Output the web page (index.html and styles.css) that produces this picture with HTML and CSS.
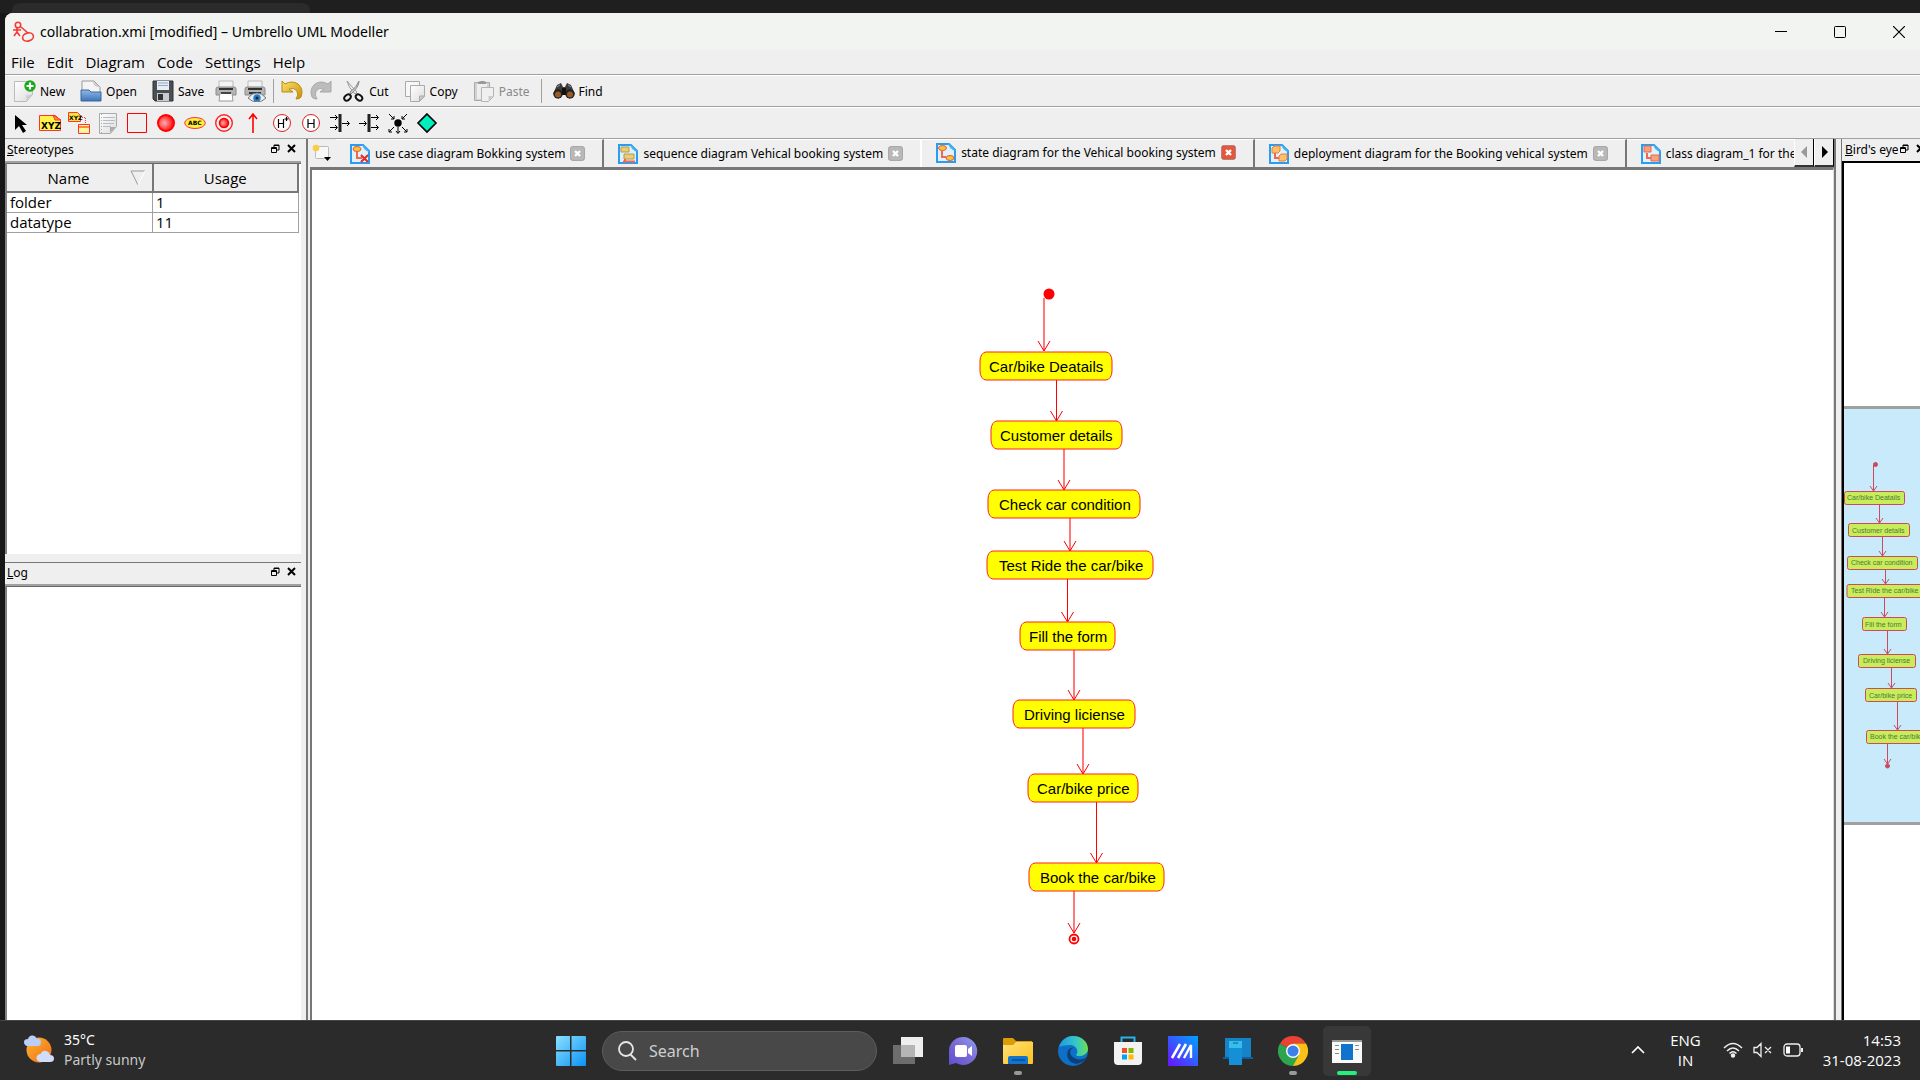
FILE: index.html
```html
<!DOCTYPE html>
<html lang="en">
<head>
<meta charset="utf-8">
<title>collabration.xmi [modified] – Umbrello UML Modeller</title>
<link rel="stylesheet" href="styles.css">
</head>
<body>
<svg class="defs" aria-hidden="true">
  <defs>
    <linearGradient id="sheet" x1="0" y1="0" x2="1" y2="1"><stop offset="0" stop-color="#fff"/><stop offset="1" stop-color="#dcdcdc"/></linearGradient>
    <linearGradient id="gold" x1="0" y1="0" x2="1" y2="1"><stop offset="0" stop-color="#fbe36a"/><stop offset="1" stop-color="#c98f06"/></linearGradient>
    <linearGradient id="blue" x1="0" y1="0" x2="0" y2="1"><stop offset="0" stop-color="#8fb9e8"/><stop offset="1" stop-color="#3f74b5"/></linearGradient>
    <radialGradient id="ball" cx=".4" cy=".5" r=".6"><stop offset="0" stop-color="#ffb0b0"/><stop offset="1" stop-color="#f00"/></radialGradient>
    <linearGradient id="win" x1="0" y1="0" x2="1" y2="1"><stop offset="0" stop-color="#8be0ff"/><stop offset="1" stop-color="#0a92f5"/></linearGradient>
    <linearGradient id="chat" x1="0" y1="1" x2="1" y2="0"><stop offset="0" stop-color="#5b4fd0"/><stop offset=".5" stop-color="#7a6bd6"/><stop offset="1" stop-color="#8fa0f0"/></linearGradient>
    <linearGradient id="folder" x1="0" y1="0" x2="1" y2="1"><stop offset="0" stop-color="#ffe07a"/><stop offset="1" stop-color="#ffc21a"/></linearGradient>
    <linearGradient id="edge" x1="0" y1="0" x2="1" y2="0"><stop offset="0" stop-color="#1f9be0"/><stop offset=".6" stop-color="#35c8c8"/><stop offset="1" stop-color="#6ee04c"/></linearGradient>
    <linearGradient id="asus" x1="0" y1="1" x2="1" y2="0"><stop offset="0" stop-color="#6a12ff"/><stop offset="1" stop-color="#00a2ff"/></linearGradient>
    <linearGradient id="sun" x1="0" y1="0" x2="1" y2="1"><stop offset="0" stop-color="#fbb62c"/><stop offset="1" stop-color="#f26a1b"/></linearGradient>
    <symbol id="doc" viewBox="0 0 20 20"><path d="M1 1h12l6 6v12H1z" fill="#dff1fd" stroke="#2a9df0" stroke-width="2"/><path d="M12 0c1 4 3 7 8 8z" fill="#45b4f5"/></symbol>
    <symbol id="float" viewBox="0 0 9 9"><path d="M3 3V1h5v5H6M3 1.500h5" fill="none" stroke="#000"/><path d="M.5 3.500h5v5h-5zM0 4.500h6" fill="none" stroke="#000"/></symbol>
    <symbol id="cross" viewBox="0 0 9 9"><path d="M1 1l7 7M8 1L1 8" stroke="#000" stroke-width="2"/></symbol>
    <symbol id="tabx" viewBox="0 0 15 15"><rect x=".5" y=".5" width="14" height="14" rx="2" fill="currentColor" stroke="#0003"/><path d="M5 5l5 5M10 5l-5 5" stroke="#fff" stroke-width="2.400"/></symbol>
  </defs>
</svg>

<div class="screen">
  <div class="behind"><div class="behind-tab"></div></div>

  <div class="window">
    <header class="titlebar">
      <svg width="22" height="22" viewBox="0 0 22 22" fill="none" stroke="#f33a35" stroke-width="1.600"><circle cx="5" cy="4" r="2.700"/><path d="M4 7v5M0 9h8M4 11l-3 4M4 11l3 4M8 6l7 6"/><ellipse cx="15" cy="16" rx="5.500" ry="4" transform="rotate(-15 15 16)"/></svg>
      <h1>collabration.xmi [modified] – Umbrello UML Modeller</h1>
      <div class="caption">
        <button aria-label="Minimize"><svg width="12" height="12"><path d="M0 5.500h12" stroke="#000"/></svg></button>
        <button aria-label="Maximize"><svg width="12" height="12"><rect x=".5" y=".5" width="11" height="11" rx="1" fill="none" stroke="#000"/></svg></button>
        <button aria-label="Close"><svg width="12" height="12"><path d="M0 0l12 12M12 0L0 12" stroke="#000" stroke-width="1.200"/></svg></button>
      </div>
    </header>

    <nav class="menubar">
      <button>File</button><button>Edit</button><button>Diagram</button><button>Code</button><button>Settings</button><button>Help</button>
    </nav>

    <div class="toolbar">
      <button class="labelled"><svg class="ic" viewBox="0 0 22 22"><path d="M.5 1.500h18v13l-6 7H.5z" fill="url(#sheet)" stroke="#bbb"/><path d="M12 21c1-3 0-5 0-6 2 1 4 0 6-1z" fill="#ccc"/><circle cx="16" cy="6" r="5.700" fill="#18a818"/><path d="M16 2.500v7M12.500 6h7" stroke="#fff" stroke-width="2.200"/></svg>New</button>
      <button class="labelled"><svg class="ic" viewBox="0 0 22 22"><path d="M2 1h12l6 6v8H2z" fill="#f4f4f4" stroke="#999"/><path d="M13 1c0 4 2 6 7 6z" fill="#ccc"/><path d="M1 10h8l2 2h10v9H1z" fill="url(#blue)" stroke="#3a67a0"/></svg>Open</button>
      <button class="labelled"><svg class="ic" viewBox="0 0 22 22"><path d="M1 1h20v20H3l-2-2z" fill="#4b4e52" stroke="#2f3134"/><path d="M5 1h12v9H5z" fill="#e8edf3"/><path d="M6 3h10M6 5.500h10" stroke="#88a9d0"/><path d="M5 13h12v8H5z" fill="#c9cccf"/><path d="M6 14h5v6H6z" fill="#333"/></svg>Save</button>
      <button aria-label="Print"><svg class="ic" viewBox="0 0 22 22"><path d="M4 1h14v8H4z" fill="#f4f4f4" stroke="#bbb"/><path d="M1 9q0-2 2-2h16q2 0 2 2v6H1z" fill="#b4b4b4" stroke="#8b8b8b"/><path d="M4 9h14" stroke="#333" stroke-width="2"/><path d="M5 13h12l1 8H4z" fill="#fff" stroke="#999"/><path d="M6 13h10" stroke="#444" stroke-width="2"/></svg></button>
      <button aria-label="Print preview"><svg class="ic" viewBox="0 0 22 22"><path d="M4 1h14v8H4z" fill="#f4f4f4" stroke="#bbb"/><path d="M1 9q0-2 2-2h16q2 0 2 2v6H1z" fill="#b4b4b4" stroke="#8b8b8b"/><path d="M4 9h14M5 13h12" stroke="#333" stroke-width="2"/><path d="M4 18q4-5 9-5t9 5q-4 4-9 4t-9-4z" fill="#e8eef5" stroke="#777"/><circle cx="13" cy="18" r="3.700" fill="#2d7cc4"/><circle cx="13" cy="18" r="1.500" fill="#123"/></svg></button>
      <span class="sep"></span>
      <button aria-label="Undo"><svg class="ic" viewBox="0 0 22 22"><path d="M1 1l3 3q7-4 13 0 6 5 3 13-1 2-5 2 3-4 1-8-3-4-8-2l4 3H1z" fill="url(#gold)" stroke="#b98a13"/></svg></button>
      <button aria-label="Redo"><svg class="ic" viewBox="0 0 22 22"><path d="M21 1l-3 3q-7-4-13 0-6 5-3 13 1 2 5 2-3-4-1-8 3-4 8-2l-4 3h11z" fill="#bcbcbc" stroke="#a8a8a8"/></svg></button>
      <button class="labelled"><svg class="ic" viewBox="0 0 22 22"><path d="M4 1q1 6 8 13l2-2Q8 6 4 1z" fill="#eee" stroke="#999"/><path d="M16 1q0 6-8 13l-1-2q7-5 9-11z" fill="#ccc" stroke="#888"/><ellipse cx="4.500" cy="17.500" rx="3.600" ry="2.600" transform="rotate(-40 4.500 17.500)" fill="none" stroke="#111" stroke-width="2"/><ellipse cx="16" cy="17.500" rx="3.600" ry="2.600" transform="rotate(40 16 17.500)" fill="none" stroke="#111" stroke-width="2"/></svg>Cut</button>
      <button class="labelled"><svg class="ic" viewBox="0 0 22 22"><path d="M1.500 1.500h14v15h-14z" fill="#f7f7f7" stroke="#aaa"/><path d="M6.500 5.500h14v11l-5 5h-9z" fill="url(#sheet)" stroke="#aaa"/><path d="M15.500 21v-5h5z" fill="#ccc" stroke="#aaa"/></svg>Copy</button>
      <button class="labelled" disabled><svg class="ic" viewBox="0 0 22 22"><path d="M1.500 2.500h15v18h-15z" fill="#d2d2d2" stroke="#aaa"/><path d="M4 4h10v15H4z" fill="#eee"/><path d="M5 4V2l3-1h3l2 1v2z" fill="#999"/><path d="M8.500 7.500h12v9l-5 5h-7z" fill="#f0f0f0" stroke="#b5b5b5"/><path d="M15.500 21v-5h5z" fill="#ccc"/></svg>Paste</button>
      <span class="sep"></span>
      <button class="labelled"><svg class="ic" viewBox="0 0 22 22"><path d="M4 5l4-2 2 4h2l2-4 4 2 4 9H0z" fill="#3a3a3a"/><circle cx="5" cy="14" r="4.700" fill="#222"/><circle cx="17" cy="14" r="4.700" fill="#222"/><path d="M9 8h4v7H9z" fill="#111"/><circle cx="5" cy="14.500" r="3" fill="#9a5a24"/><circle cx="17" cy="14.500" r="3" fill="#9a5a24"/><path d="M4 7l3-2M15 5l3 2" stroke="#999"/></svg>Find</button>
    </div>

    <div class="toolbar">
      <button aria-label="Select"><svg class="ic" viewBox="0 0 22 22"><path d="M5 3v15l4-4 4 7 3-2-4-6h5z" fill="#000"/></svg></button>
      <button aria-label="Note"><svg class="ic" viewBox="0 0 22 22"><path d="M.5 3.500h16l5 5v10H.5z" fill="#fff34a" stroke="#f33"/><path d="M14 3l2 5h6z" fill="#fb9b1c" stroke="#f33"/><text class="g-xyz" x="2" y="17">XYZ</text></svg></button>
      <button aria-label="Anchor"><svg class="ic" viewBox="0 0 22 22"><path d="M.5.500h9l3 3v6H.5z" fill="#ffe83a" stroke="#f33"/><text class="g-small" x="1" y="8">XYZ</text><path d="M10.500 12.500h11v9h-11z" fill="#fff799" stroke="#f33"/><path d="M11 14h10v2H11z" fill="#fb8b3a"/><path d="M14 5.500h3.500V12" fill="none" stroke="#f33" stroke-dasharray="1 1"/></svg></button>
      <button aria-label="Text"><svg class="ic" viewBox="0 0 22 22"><path d="M2.500 1.500h17v13l-6 7h-11z" fill="url(#sheet)" stroke="#aaa"/><path d="M6 5.500h12M6 8.500h12M6 11.500h11M6 14.500h8" stroke="#b8bcc8"/><path d="M4.500 2v19" stroke="#aaa" stroke-dasharray="1 2"/><path d="M13 21v-6h6z" fill="#aaa"/></svg></button>
      <button aria-label="Box"><svg class="ic" viewBox="0 0 22 22"><path d="M1.500 1.500h19v19h-19z" fill="none" stroke="#f00"/></svg></button>
      <button aria-label="Initial state"><svg class="ic" viewBox="0 0 22 22"><circle cx="11" cy="11" r="8" fill="url(#ball)" stroke="#f00" stroke-width="2"/></svg></button>
      <button aria-label="State"><svg class="ic" viewBox="0 0 22 22"><ellipse cx="11" cy="11" rx="10.300" ry="5.500" fill="#ffef3a" stroke="#f33"/><text class="g-small" x="4" y="13">ABC</text></svg></button>
      <button aria-label="End state"><svg class="ic" viewBox="0 0 22 22"><circle cx="11" cy="11" r="8.300" fill="none" stroke="#f22" stroke-width="1.400"/><circle cx="11" cy="11" r="4.500" fill="url(#ball)" stroke="#f00" stroke-width="1.500"/></svg></button>
      <button aria-label="Transition"><svg class="ic" viewBox="0 0 22 22"><path d="M11 21V2M7 7l4-5 4 5" fill="none" stroke="#f00" stroke-width="1.600"/></svg></button>
      <button aria-label="Deep history"><svg class="ic" viewBox="0 0 22 22"><circle cx="11" cy="11" r="8.500" fill="#fff" stroke="#d22"/><path d="M7.500 7v9M12.500 7v9M7.500 11.500h5M15.500 5v4M13.500 7h4" stroke="#000" stroke-width="1.200"/></svg></button>
      <button aria-label="Shallow history"><svg class="ic" viewBox="0 0 22 22"><circle cx="11" cy="11" r="8.500" fill="#fff" stroke="#d22"/><path d="M8 7v9M14 7v9M8 11.500h6" stroke="#000" stroke-width="1.200"/></svg></button>
      <button aria-label="Join"><svg class="ic" viewBox="0 0 22 22"><path d="M11 2v18" stroke="#222" stroke-width="3"/><path d="M1 5.500h7M6 3l2.500 2.500L6 8M1 15.500h7M6 13l2.500 2.500L6 18M13 11.500h7M18 9l2.500 2.500L18 14" fill="none" stroke="#000"/></svg></button>
      <button aria-label="Fork"><svg class="ic" viewBox="0 0 22 22"><path d="M11 2v18" stroke="#222" stroke-width="3"/><path d="M13 5.500h7M18 3l2.500 2.500L18 8M13 15.500h7M18 13l2.500 2.500L18 18M1 11.500h7M6 9l2.500 2.500L6 14" fill="none" stroke="#000"/></svg></button>
      <button aria-label="Junction"><svg class="ic" viewBox="0 0 22 22"><circle cx="11" cy="11" r="3.700"/><path d="M2 2l5 5M7 4v3H4M20 2l-5 5M15 4v3h3M7 15l-5 5M2 17v3h3M15 15l5 5M20 17v3h-3M11 15v6M9 19l2 2.500 2-2.500" fill="none" stroke="#000"/></svg></button>
      <button aria-label="Choice"><svg class="ic" viewBox="0 0 22 22"><path d="M11 2l9 9-9 9-9-9z" fill="#00efbf" stroke="#000" stroke-width="1.600"/></svg></button>
    </div>

    <main class="work">
      <div class="left">
        <section class="dock grow5">
          <div class="dock-title"><h2><u>S</u>tereotypes</h2><button aria-label="Float"><svg class="mini"><use href="#float"/></svg></button><button aria-label="Close"><svg class="mini"><use href="#cross"/></svg></button></div>
          <div class="well">
            <table>
              <thead><tr><th><span class="sorted">Name<svg width="16" height="16"><path d="M15 1H1l7 14" fill="none" stroke="#999"/><path d="M15 1L8 15" stroke="#fff"/></svg></span></th><th>Usage</th></tr></thead>
              <tbody><tr><td>folder</td><td>1</td></tr><tr><td>datatype</td><td>11</td></tr></tbody>
            </table>
          </div>
        </section>
        <section class="dock grow4">
          <div class="dock-title ruled"><h2><u>L</u>og</h2><button aria-label="Float"><svg class="mini"><use href="#float"/></svg></button><button aria-label="Close"><svg class="mini"><use href="#cross"/></svg></button></div>
          <div class="well"></div>
        </section>
      </div>

      <section class="center">
        <div class="tabs">
          <button class="corner" aria-label="New diagram"><svg width="20" height="18" viewBox="0 0 20 18"><rect x="3.500" y="2.500" width="13" height="12" rx="1" fill="#f8f8f8" stroke="#bbb"/><circle cx="4" cy="4" r="3.300" fill="#f6cf45"/><path d="M12 13h7l-3.500 4z"/></svg></button>
          <div class="strip">
            <div class="tab"><svg class="doc"><use href="#doc"/><ellipse cx="7" cy="5" rx="4" ry="2.500" fill="#f7c33c" stroke="#e85a30"/><path d="M7 8v6h5" fill="none" stroke="#f0674f" stroke-width="2"/><path d="M11 11l7 7M18 11l-7 7" stroke="#e52c22" stroke-width="2"/></svg><a href="#">use case diagram Bokking system</a><button aria-label="Close tab"><svg class="x"><use href="#tabx"/></svg></button></div>
            <div class="tab"><svg class="doc"><use href="#doc"/><path d="M3 3h8v5H3zM6 10h10v5H6z" fill="#e8cf74" stroke="#b39a50"/><path d="M5 17.500h12M7 15v2" stroke="#f0674f" stroke-width="2"/></svg><a href="#">sequence diagram Vehical booking system</a><button aria-label="Close tab"><svg class="x"><use href="#tabx"/></svg></button></div>
            <div class="tab current"><svg class="doc"><use href="#doc"/><ellipse cx="6.500" cy="5" rx="4" ry="2.500" fill="#f7c33c" stroke="#e85a30"/><path d="M6 8v6h4" fill="none" stroke="#f0674f" stroke-width="2"/><ellipse cx="14" cy="15" rx="4" ry="2.500" fill="#f7c33c" stroke="#e85a30"/></svg><a href="#">state diagram for the Vehical booking system</a><button aria-label="Close tab"><svg class="x"><use href="#tabx"/></svg></button></div>
            <div class="tab"><svg class="doc"><use href="#doc"/><path d="M3 4l2-2h6v5l-2 2H3zM10 12l2-2h6v5l-2 2h-6z" fill="#fbc16a" stroke="#ee7d3b"/><path d="M6 9v5h4" fill="none" stroke="#f0674f" stroke-width="2"/></svg><a href="#">deployment diagram for the Booking vehical system</a><button aria-label="Close tab"><svg class="x"><use href="#tabx"/></svg></button></div>
            <div class="tab"><svg class="doc"><use href="#doc"/><path d="M3 2h7v6H3zM10 11h8v6h-8z" fill="#f7a27c" stroke="#ea6a42"/><path d="M6 9v5h4" fill="none" stroke="#f0674f" stroke-width="2"/></svg><a href="#">class diagram_1 for the</a></div>
          </div>
          <button class="scroll" aria-label="Scroll left"><svg width="7" height="12"><path d="M6 0v12L0 6z" fill="#999"/></svg></button>
          <button class="scroll" aria-label="Scroll right"><svg width="7" height="12"><path d="M1 0v12l6-6z"/></svg></button>
        </div>
        <div class="canvas">
          <svg class="diagram"><g transform="translate(-312 -170)">
            <circle class="dot" cx="1049" cy="294" r="5.500"/>
            <path class="flow soft" d="M1044 298v53M1064 449v41M1070 518v33M1074 650v50M1083 728v46M1074 891v42"/>
            <path class="flow" d="M1056.500 380v41M1067.500 579v42M1096.500 802v61"/>
            <path class="flow" d="M1038 341l6 10 6-10M1050.500 411l6 10 6-10M1058 480l6 10 6-10M1064 541l6 10 6-10M1061.500 612l6 10 6-10M1068 690l6 10 6-10M1077 764l6 10 6-10M1090.500 853l6 10 6-10M1068 923l6 10 6-10"/>
            <g class="state">
              <rect x="980" y="352" width="132" height="28" rx="6" ry="9"/><rect x="991" y="421" width="131" height="28" rx="6" ry="9"/><rect x="988" y="490" width="152" height="28" rx="6" ry="9"/><rect x="987" y="551" width="166" height="28" rx="6" ry="9"/><rect x="1020" y="622" width="95" height="28" rx="6" ry="9"/><rect x="1013" y="700" width="122" height="28" rx="6" ry="9"/><rect x="1028" y="774" width="110" height="28" rx="6" ry="9"/><rect x="1029" y="863" width="135" height="28" rx="6" ry="9"/>
              <text x="989" y="372">Car/bike Deatails</text><text x="1000" y="441">Customer details</text><text x="999" y="510">Check car condition</text><text x="999" y="571">Test Ride the car/bike</text><text x="1029" y="642">Fill the form</text><text x="1024" y="720">Driving liciense</text><text x="1037" y="794">Car/bike price</text><text x="1040" y="883">Book the car/bike</text>
            </g>
            <circle cx="1074" cy="939" r="4.500" fill="#fff" stroke="#f00" stroke-width="1.800"/><circle class="dot" cx="1074" cy="939" r="2.300"/>
          </g></svg>
        </div>
      </section>

      <section class="right">
        <div class="dock-title"><h2><u>B</u>ird's eye</h2><button aria-label="Float"><svg class="mini"><use href="#float"/></svg></button><button aria-label="Close"><svg class="mini"><use href="#cross"/></svg></button></div>
        <div class="overview">
          <div class="viewport">
            <svg class="bird"><g transform="translate(-1844 -409)">
              <path d="M1873.500 465v26M1879.500 505v18M1882.500 537v19M1885.500 569v15M1884.500 597v20M1887.500 630v24M1891.500 667v21M1897.500 701v29M1887.500 743v21"/>
              <path d="M1870 486l3.500 5 3.500-5M1876 518l3.500 5 3.500-5M1879 551l3.500 5 3.500-5M1882 579l3.500 5 3.500-5M1881 612l3.500 5 3.500-5M1884 649l3.500 5 3.500-5M1888 683l3.500 5 3.500-5M1894 725l3.500 5 3.500-5M1884 759l3.500 5 3.500-5"/>
              <circle cx="1875.500" cy="464.500" r="2"/><circle cx="1887.500" cy="766" r="2"/>
              <rect x="1844.500" y="491.500" width="60" height="13" rx="2"/><rect x="1848.500" y="523.500" width="61" height="13" rx="2"/><rect x="1847.500" y="556.500" width="70" height="13" rx="2"/><rect x="1847" y="584.500" width="77" height="13" rx="2"/><rect x="1862.500" y="617.500" width="44" height="13" rx="2"/><rect x="1858.500" y="654.500" width="57" height="13" rx="2"/><rect x="1865.500" y="688.500" width="51" height="13" rx="2"/><rect x="1866.500" y="730.500" width="63" height="13" rx="2"/>
              <text x="1847" y="500">Car/bike Deatails</text><text x="1852" y="533">Customer details</text><text x="1851" y="565">Check car condition</text><text x="1851" y="593">Test Ride the car/bike</text><text x="1865" y="627">Fill the form</text><text x="1863" y="663">Driving liciense</text><text x="1869" y="698">Car/bike price</text><text x="1870" y="739">Book the car/bike</text>
            </g></svg>
          </div>
        </div>
      </section>
    </main>
  </div>

  <footer class="taskbar">
    <button class="weather">
      <svg width="32" height="30" viewBox="0 0 32 30"><circle cx="15" cy="15" r="12.500" fill="url(#sun)"/><path d="M3 11q-3-1-3-4t4-3q1-4 5-3.500 3 .5 3.500 3 4-.5 4.500 3.500 0 4-3 4z" fill="#bccdf7"/><path d="M16 27q-4-1-3.500-5 1-3 4-3 2-4 6-3 3 1 3.500 4 4 0 4 3.500t-4 3.500z" fill="#cfdcfb"/></svg>
      <span><span>35°C</span><span class="dim">Partly sunny</span></span>
    </button>
    <div class="apps">
      <button class="start" aria-label="Start"><svg width="30" height="30"><path d="M0 1q0-1 1-1h13v14H0zM15.500 0H29q1 0 1 1v13H15.500zM0 15.500h14V30H1q-1 0-1-1zM15.500 15.500H30V29q0 1-1 1H15.500z" fill="url(#win)"/></svg></button>
      <label class="search"><svg width="20" height="20" fill="none" stroke="#e6e6e6" stroke-width="1.800"><circle cx="9" cy="8" r="7"/><path d="M13.500 13.500L19 19"/></svg><input type="text" placeholder="Search" aria-label="Search"></label>
      <button class="app" aria-label="Task view"><svg width="30" height="30"><path d="M0 9h22v19H0z" fill="#6d6d6d"/><path d="M8 1h22v20H8z" fill="#eee"/><path d="M8 9h14v12H8z" fill="#b5b5b5"/></svg></button>
      <button class="app" aria-label="Chat"><svg width="30" height="30"><path d="M15 1a14 14 0 1 1-7 26l-7 2V15A14 14 0 0 1 15 1z" fill="url(#chat)"/><rect x="7" y="9" width="12" height="12" rx="2" fill="#fff"/><path d="M20 13l4-3v10l-4-3z" fill="#fff"/></svg></button>
      <button class="app open" aria-label="File Explorer"><svg width="30" height="30"><path d="M0 3q0-1 1-1h9l3 3h16v8H0z" fill="#dd9b05"/><path d="M0 9h10l3-3h17v21q0 1-1 1H1q-1 0-1-1z" fill="url(#folder)"/><path d="M5 28v-6q0-2 2-2h16q2 0 2 2v6z" fill="#1473cc"/><path d="M9 24h13" stroke="#0a4b91" stroke-width="1.500"/></svg></button>
      <button class="app" aria-label="Edge"><svg width="30" height="30"><circle cx="15" cy="15" r="15" fill="#0e6fc7"/><path d="M1 11C4 2 11 0 15 0c9 0 15 6 15 13 0 6-9 9-12 6 3-3 1-9-5-10-6 0-10 1-12 2z" fill="url(#edge)"/><path d="M29 21c-5 4-13 3-16-2-2-4 0-7 3-7-7-2-9 9-4 13 5 5 12 3 17-4z" fill="#0b3f78"/></svg></button>
      <button class="app" aria-label="Store"><svg width="30" height="30"><path d="M8.500 7V1.500h13V7" fill="none" stroke="#29b3ec" stroke-width="2"/><path d="M1 6h28v19q0 4-4 4H5q-4 0-4-4z" fill="#f2f2f2"/><path d="M9 12h5v5H9z" fill="#f25022"/><path d="M15.500 12h5v5h-5z" fill="#7fba00"/><path d="M9 18.500h5v5H9z" fill="#00a4ef"/><path d="M15.500 18.500h5v5h-5z" fill="#ffb900"/></svg></button>
      <button class="app" aria-label="MyASUS"><svg width="30" height="30"><path d="M0 0h30v30H0z" fill="url(#asus)"/><path d="M4 22l8-14M10 22l8-14" stroke="#fff" stroke-width="2.600"/><path d="M16 22l7-13v13" fill="none" stroke="#fff" stroke-width="2.400"/></svg></button>
      <button class="app" aria-label="Phone link"><svg width="30" height="30"><path d="M2 2h26v19H2z" fill="#1683c7"/><path d="M0 21h30v2H0z" fill="#0a5f9e"/><path d="M6 5h13v24H6z" fill="#35bdf0"/><path d="M6 12h13v17H6z" fill="#158fd6"/><path d="M10 7h5" stroke="#066"/></svg></button>
      <button class="app open" aria-label="Chrome"><svg width="30" height="30"><path d="M15 15L2 7.500A15 15 0 0 1 28 7.500H15z" fill="#ea4335"/><path d="M15 15v15A15 15 0 0 0 28 7.500H15z" fill="#fbc116"/><path d="M15 15l6 4-6 11A15 15 0 0 1 2 7.500z" fill="#2da44e"/><circle cx="15" cy="15" r="7" fill="#fff"/><circle cx="15" cy="15" r="5.600" fill="#3d7fe8"/></svg></button>
      <button class="app active" aria-label="Umbrello"><svg width="30" height="30"><path d="M0 4h30v23H0z" fill="#fafafa"/><path d="M0 4h30v2H0z" fill="#999"/><path d="M9 8h12v16H9z" fill="#1173cc"/><path d="M3 9.500h4M3 13.500h4M3 17.500h4M23 9.500h4M23 13.500h4" stroke="#888"/></svg></button>
    </div>
    <div class="tray">
      <button aria-label="Hidden icons"><svg width="14" height="8"><path d="M1 7l6-6 6 6" fill="none" stroke="#fff" stroke-width="1.700"/></svg></button>
      <button class="lang"><span>ENG</span><span>IN</span></button>
      <button class="status" aria-label="Network, sound, battery">
        <svg width="20" height="16" fill="none" stroke="#eee" stroke-width="1.500"><path d="M1 6q9-9 18 0M4 9q6-6 12 0M6.500 11.500q3.500-3.500 7 0"/><circle cx="10" cy="13.500" r="1.500" fill="#eee"/></svg>
        <svg width="20" height="16" fill="none" stroke="#eee" stroke-width="1.300"><path d="M1 5.500h3l4-4v13l-4-4H1zM12 5l6 6M18 5l-6 6"/></svg>
        <svg width="20" height="16" fill="none" stroke="#eee" stroke-width="1.300"><rect x="1" y="2" width="16" height="12" rx="3"/><path d="M19 6v4" stroke-width="2"/><path d="M3 4.500h4v7H3z" fill="#fff" stroke="none"/></svg>
      </button>
      <button class="clock"><span>14:53</span><span>31-08-2023</span></button>
    </div>
  </footer>
</div>
</body>
</html>
```
FILE: styles.css
```css
* { box-sizing: border-box; }
body { margin: 0; background: #1f1f1f; }
button { margin: 0; padding: 0; border: 0; background: none; font: inherit; color: inherit; display: flex; align-items: center; flex: none; }
button > svg { display: block; flex: none; }
h1, h2 { margin: 0; font: inherit; }
.defs { position: absolute; width: 0; height: 0; }

.screen { height: 100vh; display: flex; flex-direction: column; overflow: hidden; background: #171717; }
.behind { height: 13px; flex: none; padding: 3px 0 0 12px; background: #1f1f1f; }
.behind-tab { width: 298px; height: 10px; border-radius: 8px 8px 0 0; background: #2b2b2b; }

.window { flex: 1; min-height: 0; margin-left: 5px; display: flex; flex-direction: column; background: #efefef; border-radius: 8px 0 0 0; overflow: hidden; font-family: "Noto Sans", sans-serif; font-size: 12px; color: #000; }

.titlebar { height: 37px; flex: none; display: flex; align-items: center; gap: 5px; padding: 0 15px 0 8px; background: #f2f4f1; font-size: 14px; }
.caption { margin-left: auto; display: flex; gap: 47px; }
.menubar { height: 25px; flex: none; display: flex; align-items: center; gap: 12px; padding-left: 6px; border-bottom: 1px solid #a0a0a0; font-family: "Open Sans", sans-serif; font-size: 15px; }

.toolbar { height: 32px; flex: none; display: flex; align-items: center; gap: 7px; padding-left: 5px; border-top: 1px solid #fff; border-bottom: 1px solid #a0a0a0; }
.toolbar .labelled { gap: 4px; padding: 0 4px; }
.toolbar button:disabled { color: #8a8a8a; }
.ic { width: 22px; height: 22px; }
.sep { width: 1px; height: 24px; background: #a0a0a0; }
.g-xyz, .g-small { font-family: "DejaVu Sans", sans-serif; font-weight: bold; font-size: 9px; }
.g-small { font-size: 6px; }

.work { flex: 1; min-height: 0; display: flex; }

.left { width: 296px; flex: none; display: flex; flex-direction: column; gap: 8px; }
.dock { display: flex; flex-direction: column; min-height: 0; }
.grow5 { flex: 415 1 0; }
.grow4 { flex: 459 1 0; }
.dock-title { height: 24px; flex: none; display: flex; align-items: center; gap: 7px; padding: 0 5px 3px 2px; border-bottom: 2px solid #a0a0a0; }
.dock-title.ruled { border-top: 1px solid #777; }
.dock-title h2 { flex: 1; min-width: 0; padding-top: 3px; line-height: 18px; overflow: hidden; white-space: nowrap; }
.mini { width: 9px; height: 9px; }
.well { flex: 1; min-height: 0; background: #fff; border-left: 2px solid #808080; border-top: 1px solid #696969; }

table { width: 292px; table-layout: fixed; border-collapse: collapse; font-family: "Open Sans", sans-serif; font-size: 15px; }
th { height: 28px; padding: 0; background: #efefef; font-weight: normal; border-right: 2px solid #777; border-bottom: 2px solid #777; }
td { height: 20px; padding: 0 3px; line-height: 18px; border: 1px solid #a0a0a0; border-left: 0; }
.sorted { display: flex; align-items: center; justify-content: flex-end; gap: 40px; padding-right: 6px; }

.center { flex: 1; min-width: 0; margin-left: 5px; display: flex; flex-direction: column; border-left: 2px solid #777; border-right: 2px solid #777; }
.tabs { height: 28px; flex: none; display: flex; align-items: stretch; }
.corner { padding: 0 4px; width: 28px; }
.strip { flex: 1; min-width: 0; display: flex; overflow: hidden; }
.tab { flex: none; display: flex; align-items: center; gap: 5px; padding: 0 17px 0 14px; border-top: 1px solid #fff; border-right: 2px solid #777; color: #000; }
.tab:has(+ .current) { border-right-color: #fff; }
.tab.current { padding-bottom: 2px; }
.tab a { color: inherit; text-decoration: none; white-space: nowrap; }
.doc { width: 20px; height: 20px; flex: none; }
.x { width: 15px; height: 15px; color: #b8b8b8; }
.current .x { color: #e2583f; }
.scroll { width: 20px; justify-content: center; border-right: 1px solid #000; border-bottom: 2px solid #333; border-left: 1px solid #fff; }
.canvas { flex: 1; min-height: 0; margin-left: 2px; background: #fff; border-top: 3px solid #777; border-left: 2px solid #777; border-right: 1px solid #ddd; overflow: hidden; }

.diagram { display: block; width: 100%; height: 100%; }
.flow { fill: none; stroke: #f00; stroke-width: 1; }
.soft { stroke: #ff7a7a; stroke-width: 2; }
.dot { fill: #f00; }
.state rect { fill: #ff0; stroke: #ff2020; }
.state text { font-family: "Liberation Sans", sans-serif; font-size: 15px; }

.right { width: 79px; flex: none; margin-left: 5px; display: flex; flex-direction: column; border-left: 1px solid #777; }
.right .dock-title { padding: 0 0 3px 3px; margin-right: -5px; border-color: #000; }
.right h2 { margin-right: -5px; }
.overview { flex: 1; min-height: 0; padding-top: 243px; background: #fff; border-left: 2px solid #000; }
.viewport { height: 419px; background: #c8eafa; border-top: 3px solid #a0a0a0; border-bottom: 3px solid #a0a0a0; }
.bird { display: block; width: 100%; height: 100%; }
.bird path { fill: none; stroke: #cc4a5c; }
.bird circle { fill: #cc4a5c; stroke: #cc4a5c; }
.bird rect { fill: #c8ec5a; stroke: #cc4a5c; }
.bird text { font-family: "Liberation Sans", sans-serif; font-size: 7px; fill: #4a7a3a; }

.taskbar { height: 60px; flex: none; display: grid; grid-template-columns: 1fr auto 1fr; align-items: center; background: #2b2b2b; border-top: 1px solid #444; color: #fff; font-family: "Noto Sans", sans-serif; font-size: 14px; line-height: 20px; }
.weather { gap: 8px; padding: 0 0 2px 24px; text-align: left; }
.weather span span { display: block; }
.dim { color: #c8c8c8; }
.apps { display: flex; align-items: center; padding-left: 7px; }
.start { margin-right: 16px; }
.search { width: 275px; height: 40px; display: flex; align-items: center; gap: 12px; padding: 0 14px; margin-right: 3px; border-radius: 20px; background: #484848; border: 1px solid #5c5c5c; }
.search input { flex: 1; min-width: 0; padding: 0; border: 0; background: none; color: #fff; font: inherit; font-size: 16px; }
.search input::placeholder { color: #cfcfcf; }
.app { width: 55px; height: 50px; justify-content: center; position: relative; }
.app.active { width: 48px; margin-left: 3px; background: #383838; border-radius: 5px; }
.app.open::after, .app.active::after { content: ""; position: absolute; bottom: 1px; width: 8px; height: 4px; border-radius: 2px; background: #999; }
.app.active::after { width: 20px; background: #25f07c; }
.tray { justify-self: end; display: flex; align-items: center; padding: 0 19px 2px 0; font-family: "Open Sans", sans-serif; font-size: 15px; }
.tray > button { flex-direction: column; }
.lang { margin-left: 25px; }
.tray .status { flex-direction: row; gap: 10px; margin-left: 22px; }
.tray .clock { align-items: flex-end; margin-left: 20px; }
```
